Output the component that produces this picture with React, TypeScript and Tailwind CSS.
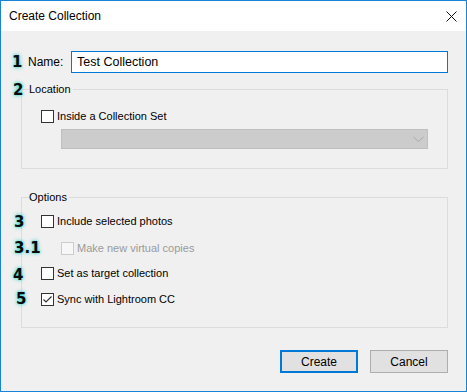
import React from 'react';

const font = { fontFamily: '"Liberation Sans", Arial, sans-serif' };

interface CheckProps {
  label: string;
  checked?: boolean;
  disabled?: boolean;
}

const CheckRow: React.FC<CheckProps> = ({ label, checked, disabled }) => (
  <div className="flex items-center h-[13px]">
    <span
      className={
        disabled
          ? 'w-[13px] h-[13px] border border-[#cccccc] bg-[#f7f7f7] flex items-center justify-center'
          : 'w-[13px] h-[13px] border border-[#333333] bg-white flex items-center justify-center'
      }
    >
      {checked && (
        <svg width="11" height="11" viewBox="0 0 11 11">
          <polyline points="1.5,5.5 4,8 9.5,2.5" fill="none" stroke="#333" strokeWidth="1.2" />
        </svg>
      )}
    </span>
    <span className={disabled ? 'ml-[3px] text-[11px] text-[#9a9a9a]' : 'ml-[3px] text-[11px] text-black'}>
      {label}
    </span>
  </div>
);

const Marker: React.FC<{ n: string; className: string }> = ({ n, className }) => (
  <span
    className={`absolute h-[16px] leading-[16px] text-[15px] font-bold text-[#0a0a0a] [text-shadow:0_0_2px_#3ee8e0,0_0_4px_#29c9c0] ${className}`}
    style={{ fontFamily: '"DejaVu Sans", sans-serif' }}
  >
    {n}
  </span>
);

export default function App() {
  return (
    <div className="relative w-[467px] h-[392px] bg-white" style={font}>
      <div className="w-[467px] h-[392px] border border-[#1883d7] flex flex-col">
        {/* title bar */}
        <div className="h-[30px] bg-white flex items-center justify-between pl-[8px] pr-[9px]">
          <span className="text-[12px] text-black">Create Collection</span>
          <svg width="11" height="11" viewBox="0 0 11 11">
            <path d="M0.5 0.5 L10.5 10.5 M10.5 0.5 L0.5 10.5" stroke="#111" strokeWidth="1" />
          </svg>
        </div>

        <div className="flex-1 bg-[#f0f0f0] flex flex-col">
          {/* name */}
          <div className="flex items-center mt-[20px] pl-[27px]">
            <span className="w-[43px] text-[12px] text-black">Name:</span>
            <div className="w-[377px] h-[22px] border border-[#0078d7] bg-white flex items-center pl-[5px] text-[12.5px] text-black">
              Test Collection
            </div>
          </div>

          {/* location */}
          <fieldset className="ml-[20px] mt-[9px] w-[427px] border border-[#dcdcdc] pb-[19px]">
            <legend className="ml-[7px] pr-[2px] h-[14px] leading-[14px] text-[11px] text-black">Location</legend>
            <div className="mt-[14px] pl-[19px]">
              <CheckRow label="Inside a Collection Set" />
            </div>
            <div className="mt-[6px] ml-[39px] w-[367px] h-[20px] bg-[#cccccc] border border-[#bfbfbf] flex items-center justify-end pr-[3px]">
              <svg width="11" height="7" viewBox="0 0 11 7">
                <polyline points="0.5,1 5.5,5.5 10.5,1" fill="none" stroke="#a8a8a8" strokeWidth="1" />
              </svg>
            </div>
          </fieldset>

          {/* options */}
          <fieldset className="ml-[20px] mt-[21px] w-[427px] border border-[#dcdcdc] pb-[21px]">
            <legend className="ml-[7px] pr-[2px] h-[14px] leading-[14px] text-[11px] text-black">Options</legend>
            <div className="flex flex-col pl-[19px]">
              <div className="mt-[11px]">
                <CheckRow label="Include selected photos" />
              </div>
              <div className="mt-[14px] pl-[20px]">
                <CheckRow label="Make new virtual copies" disabled />
              </div>
              <div className="mt-[12px]">
                <CheckRow label="Set as target collection" />
              </div>
              <div className="mt-[13px]">
                <CheckRow label="Sync with Lightroom CC" checked />
              </div>
            </div>
          </fieldset>

          {/* buttons */}
          <div className="flex justify-end gap-[12px] mt-[22px] pr-[18px]">
            <button className="w-[78px] h-[23px] border-2 border-[#0078d7] bg-[#e1e1e1] text-[12px] text-black">
              Create
            </button>
            <button className="w-[78px] h-[23px] border border-[#adadad] bg-[#e1e1e1] text-[12px] text-black">
              Cancel
            </button>
          </div>
        </div>
      </div>

      <Marker n="1" className="left-[12px] top-[54px]" />
      <Marker n="2" className="left-[13px] top-[82px]" />
      <Marker n="3" className="left-[14px] top-[214px]" />
      <Marker n="3.1" className="left-[14px] top-[240px]" />
      <Marker n="4" className="left-[13px] top-[267px]" />
      <Marker n="5" className="left-[16px] top-[291px]" />
    </div>
  );
}
